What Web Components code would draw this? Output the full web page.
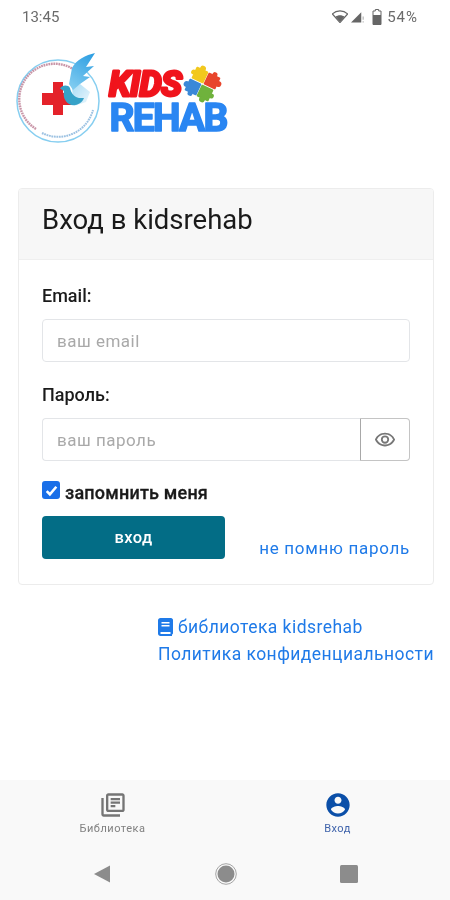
<!DOCTYPE html>
<html lang="ru">
<head>
<meta charset="utf-8">
<title>kidsrehab</title>
<style>
  html, body {
    margin: 0;
    height: 900px;
    background: #fff;
    font-family: Roboto, "Liberation Sans", sans-serif;
  }

  body {
    display: flex;
    flex-direction: column;
    overflow: hidden;
    filter: blur(0.35px);
  }
</style>
</head>
<body>
<kr-status-bar time="13:45" battery="54%"></kr-status-bar>
<kr-logo></kr-logo>
<kr-login-card heading="Вход в kidsrehab">
  <kr-field label="Email:" placeholder="ваш email"></kr-field>
  <kr-field label="Пароль:" placeholder="ваш пароль" reveal></kr-field>
  <kr-login-actions></kr-login-actions>
</kr-login-card>
<kr-links></kr-links>
<kr-tab-bar></kr-tab-bar>
<kr-nav-bar></kr-nav-bar>

<script>
/**
 * Small helper, every element below is a template plus an open shadow root.
 */
const makeTemplate = (html) => {
  const template = document.createElement('template')
  template.innerHTML = html
  return template
}

const statusTemplate = makeTemplate(`
<style>
  :host {
    display: flex;
    justify-content: space-between;
    align-items: center;
    height: 33px;
    padding: 0 32px 0 22px;
    font-size: 15px;
    color: #6b6b6b;
  }

  .right {
    display: flex;
    align-items: center;
  }

  #battery {
    margin-left: 5px;
    letter-spacing: 1px;
  }

  .signal {
    margin: 0 7px 0 3px;
  }

  svg {
    display: block;
    fill: #666;
  }
</style>
<span id="time"></span>
<div class="right">
  <svg width="16" height="13" viewBox="0 0 17 14">
    <path d="M8.500 13.500 0.300 4.200C2.400 2.300 5.300 1 8.500 1s6.100 1.300 8.200 3.200z" fill="none" stroke="#666" stroke-width="1.300"/>
    <path d="M8.500 13 3.600 7.300C5 6.300 6.700 5.700 8.500 5.700s3.500.6 4.900 1.600z"/>
  </svg>
  <svg class="signal" width="14" height="14" viewBox="0 0 15 14">
    <path d="M0 13 11 2v11z"/>
    <path d="M12.500 6.500h1v3.500h-1zM12.500 11.500h1V13h-1z" opacity=".6"/>
  </svg>
  <svg width="10" height="16" viewBox="0 0 10 16">
    <path d="M3.300 0.500h3.400v1.500H9v13.500H1V2h2.300z" fill="none" stroke="#666"/>
    <path d="M1 6h8v9.500H1z"/>
  </svg>
  <span id="battery"></span>
</div>
`)

customElements.define('kr-status-bar',
  class extends HTMLElement {
    constructor () {
      super()
      this.attachShadow({ mode: 'open' })
        .appendChild(statusTemplate.content.cloneNode(true))
      this.shadowRoot.querySelector('#time').textContent = this.getAttribute('time')
      this.shadowRoot.querySelector('#battery').textContent = this.getAttribute('battery')
    }
  })

// the viewBox uses page coordinates so it is easy to compare with the screenshot
const logoTemplate = makeTemplate(`
<style>
  :host {
    display: block;
    height: 155px;
  }

  svg {
    display: block;
    margin-left: 15px;
    margin-top: 17px;
    filter: blur(0.45px);
  }

  text {
    font-family: Roboto, sans-serif;
    font-weight: 700;
    stroke-linejoin: round;
  }
</style>
<svg width="220" height="100" viewBox="15 50 220 100" role="img" aria-label="Kids Rehab">
  <defs>
    <linearGradient id="wing" x1="0.8" y1="0" x2="0.3" y2="1">
      <stop offset="0" stop-color="#2f9fe2"/>
      <stop offset="1" stop-color="#7fcbf0"/>
    </linearGradient>
    <linearGradient id="pale" x1="0" y1="0" x2="1" y2="1">
      <stop offset="0" stop-color="#a9dcf5"/>
      <stop offset="1" stop-color="#eef8fd"/>
    </linearGradient>
  </defs>
  <circle cx="58" cy="101" r="41" fill="#fff" stroke="#86cef0" stroke-width="1.500"/>
  <path d="M36 129A35 35 0 0 1 73 69" fill="none" stroke="#a5506e" stroke-width="2.400" stroke-dasharray="1.800 .7" opacity=".6"/>
  <path d="M42 133A36 36 0 0 0 93 110" fill="none" stroke="#4c8fcb" stroke-width="2" stroke-dasharray="1.800 .7" opacity=".55"/>
  <path d="M53 82h10v11h9v12h-9v10H53v-10H42V93h11z" fill="#e4222a"/>
  <path d="M72 88 80 84 90 92 86 102 74 106z" fill="url(#pale)"/>
  <path d="M95 53C86 55 76 60 72 68L69 84 73 90 80 84 90 77 83 76 94 66 86 67z" fill="url(#wing)"/>
  <path d="M60 88.500C62 85 68 84.500 70 88 71 93 74 97 79 98L84 98C82 104 74 107 69 104 64 101 63 95 64 91z" fill="#36a2c8"/>
  <text x="109" y="96" font-size="35" letter-spacing="-.5" font-style="italic" fill="#f0141c" stroke="#f0141c" stroke-width="3">KIDS</text>
  <text x="109.500" y="131" font-size="39" letter-spacing="-1.750" fill="#2a86f2" stroke="#2a86f2" stroke-width="1.600">REHAB</text>
  <g transform="rotate(25 200 75)">
    <rect x="193.500" y="68.500" width="13" height="13" rx="1" fill="#f2c81e"/>
    <circle cx="200" cy="68" r="3" fill="#f2c81e"/>
    <circle cx="193" cy="75" r="2.500" fill="#f2c81e"/>
  </g>
  <g transform="rotate(25 212 81)">
    <rect x="205.500" y="74.500" width="13" height="13" rx="1" fill="#e8452c"/>
    <circle cx="219" cy="81" r="3" fill="#e8452c"/>
    <circle cx="212" cy="74" r="2.500" fill="#e8452c"/>
  </g>
  <g transform="rotate(25 193 87)">
    <rect x="186.500" y="80.500" width="13" height="13" rx="1" fill="#3a88d8"/>
    <circle cx="186" cy="87" r="3" fill="#3a88d8"/>
    <circle cx="193" cy="94" r="2.500" fill="#3a88d8"/>
  </g>
  <g transform="rotate(25 205 93)">
    <rect x="198.500" y="86.500" width="13" height="13" rx="1" fill="#6fb23c"/>
    <circle cx="205" cy="100" r="3" fill="#6fb23c"/>
    <circle cx="212" cy="93" r="2.500" fill="#6fb23c"/>
  </g>
</svg>
`)

customElements.define('kr-logo',
  class extends HTMLElement {
    constructor () {
      super()
      this.attachShadow({ mode: 'open' })
        .appendChild(logoTemplate.content.cloneNode(true))
    }
  })

const cardTemplate = makeTemplate(`
<style>
  :host {
    display: block;
    margin: 0 16px 0 18px;
    border: 1px solid #ececec;
    border-radius: 4px;
    background: #fff;
    overflow: hidden;
    color: #1a1a1a;
  }

  header {
    height: 71px;
    padding: 0 0 10px 23px;
    display: flex;
    align-items: center;
    box-sizing: border-box;
    background: #f7f7f7;
    border-bottom: 1px solid #efefef;
    font-size: 27.5px;
  }

  .body {
    padding: 25px 23px 25px;
  }
</style>
<header id="heading"></header>
<div class="body"><slot></slot></div>
`)

customElements.define('kr-login-card',
  class extends HTMLElement {
    constructor () {
      super()
      this.attachShadow({ mode: 'open' })
        .appendChild(cardTemplate.content.cloneNode(true))
      this.shadowRoot.querySelector('#heading').textContent = this.getAttribute('heading')
    }
  })

const fieldTemplate = makeTemplate(`
<style>
  :host {
    display: block;
    margin-bottom: 22px;
  }

  label {
    display: block;
    font-size: 18px;
    font-weight: 500;
    line-height: 22px;
    margin-bottom: 12px;
  }

  .group {
    display: flex;
    height: 43px;
  }

  input {
    flex: 1;
    min-width: 0;
    box-sizing: border-box;
    padding: 0 14px;
    border: 1px solid #e3e5e8;
    border-radius: 4px;
    outline: none;
    font: 17px Roboto, "Liberation Sans", sans-serif;
    letter-spacing: 0.5px;
    color: #333;
  }

  input::placeholder {
    color: #a9a9a9;
    opacity: 1;
  }

  button {
    display: none;
    width: 50px;
    padding: 0;
    background: #fff;
    border: 1px solid #c4c4c4;
    border-left-color: #a8a8a8;
    border-radius: 0 4px 4px 0;
    align-items: center;
    justify-content: center;
  }

  :host([reveal]) input {
    border-radius: 4px 0 0 4px;
    border-right: 0;
  }

  :host([reveal]) button {
    display: flex;
  }

  svg {
    display: block;
    fill: #777;
  }
</style>
<label for="input"></label>
<div class="group">
  <input id="input" type="text">
  <button type="button" aria-label="показать пароль">
    <svg width="22" height="22" viewBox="0 0 24 24">
      <path d="M12 6a9.770 9.770 0 0 1 8.820 5.500C19.170 14.870 15.790 17 12 17s-7.170-2.130-8.820-5.500A9.770 9.770 0 0 1 12 6m0-2C7 4 2.730 7.110 1 11.500 2.730 15.890 7 19 12 19s9.270-3.110 11-7.500C21.270 7.110 17 4 12 4zm0 5a2.500 2.500 0 1 1 0 5 2.500 2.500 0 0 1 0-5m0-2a4.500 4.500 0 1 0 0 9 4.500 4.500 0 0 0 0-9z"/>
    </svg>
  </button>
</div>
`)

customElements.define('kr-field',
  class extends HTMLElement {
    constructor () {
      super()
      this.attachShadow({ mode: 'open' })
        .appendChild(fieldTemplate.content.cloneNode(true))
      this.shadowRoot.querySelector('label').textContent = this.getAttribute('label')
      this.shadowRoot.querySelector('input').placeholder = this.getAttribute('placeholder')
    }
  })

const actionsTemplate = makeTemplate(`
<style>
  :host {
    display: block;
    margin-top: -3px;
  }

  .remember {
    display: flex;
    align-items: center;
    gap: 5px;
    height: 20px;
    font-size: 18px;
    font-weight: 500;
    letter-spacing: 0.2px;
    -webkit-text-stroke: 0.3px;
  }

  .remember span:last-child {
    padding-top: 5px;
  }

  .box {
    width: 18px;
    height: 18px;
    border-radius: 3px;
    background: #1a6fe8;
    display: flex;
    align-items: center;
    justify-content: center;
  }

  .row {
    display: flex;
    justify-content: space-between;
    align-items: flex-end;
    margin-top: 16px;
  }

  button {
    width: 183px;
    height: 43px;
    border: 0;
    border-radius: 4px;
    background: #036d86;
    color: #fff;
    font: 500 16.5px Roboto, "Liberation Sans", sans-serif;
    letter-spacing: 0.4px;
    padding: 0;
  }

  a {
    color: #1f7ae8;
    font-size: 17px;
    letter-spacing: 0.7px;
    line-height: 22px;
    text-decoration: none;
  }
</style>
<div class="remember">
  <span class="box">
    <svg width="15" height="15" viewBox="0 0 14 14"><path d="M2.500 7.500 5.500 10.500 11.500 3.500" fill="none" stroke="#fff" stroke-width="2.400"/></svg>
  </span>
  <span>запомнить меня</span>
</div>
<div class="row">
  <button type="button">вход</button>
  <a href="#">не помню пароль</a>
</div>
`)

customElements.define('kr-login-actions',
  class extends HTMLElement {
    constructor () {
      super()
      this.attachShadow({ mode: 'open' })
        .appendChild(actionsTemplate.content.cloneNode(true))
    }
  })

const linksTemplate = makeTemplate(`
<style>
  :host {
    display: flex;
    flex-direction: column;
    align-items: flex-start;
    gap: 5px;
    margin: 31px 0 0 158px;
    flex: 1;
    font-size: 17.5px;
    letter-spacing: 0.45px;
    line-height: 22px;
  }

  a {
    display: flex;
    align-items: center;
    gap: 5px;
    color: #1f7ae8;
    text-decoration: none;
    white-space: nowrap;
  }

  svg {
    display: block;
  }
</style>
<a href="#">
  <svg width="15" height="18" viewBox="0 0 15 18">
    <path d="M2.500 0H13c1 0 2 1 2 2v13c0 1-1 1.500-1 1.500V18H2.500C1 18 0 17 0 15.500v-13C0 1 1 0 2.500 0z" fill="#1f7ae8"/>
    <path d="M3.500 4h8v1.500h-8zM3.500 7h8v1.500h-8z" fill="#fff"/>
    <path d="M2.500 14h10v2h-10z" fill="#fff"/>
  </svg>
  библиотека kidsrehab
</a>
<a href="#">Политика конфиденциальности</a>
`)

customElements.define('kr-links',
  class extends HTMLElement {
    constructor () {
      super()
      this.attachShadow({ mode: 'open' })
        .appendChild(linksTemplate.content.cloneNode(true))
    }
  })

const tabsTemplate = makeTemplate(`
<style>
  :host {
    display: flex;
    justify-content: space-around;
    height: 68px;
    background: #f9f9f9;
    font-size: 11px;
    letter-spacing: 0.5px;
  }

  .tab {
    width: 225px;
    display: flex;
    flex-direction: column;
    align-items: center;
    padding-top: 11px;
    gap: 3px;
    color: #808080;
    box-sizing: border-box;
  }

  .tab.active {
    color: #3f63ab;
  }

  svg {
    display: block;
  }
</style>
<div class="tab">
  <svg width="28" height="28" viewBox="0 0 24 24" fill="#757575">
    <path d="M4 6H2v14c0 1.100.9 2 2 2h14v-2H4V6zm16-4H8c-1.100 0-2 .9-2 2v12c0 1.100.9 2 2 2h12c1.100 0 2-.9 2-2V4c0-1.100-.9-2-2-2zm0 14H8V4h12v12zM10 9h8v2h-8zm0 3h4v2h-4zm0-6h8v2h-8z"/>
  </svg>
  <span>Библиотека</span>
</div>
<div class="tab active">
  <svg width="28" height="28" viewBox="0 0 24 24" fill="#0b4fa8">
    <path d="M12 2C6.480 2 2 6.480 2 12s4.480 10 10 10 10-4.480 10-10S17.520 2 12 2zm0 3c1.660 0 3 1.340 3 3s-1.340 3-3 3-3-1.340-3-3 1.340-3 3-3zm0 14.200c-2.500 0-4.710-1.280-6-3.220.03-1.990 4-3.080 6-3.080 1.990 0 5.970 1.090 6 3.080-1.290 1.940-3.500 3.220-6 3.220z"/>
  </svg>
  <span>Вход</span>
</div>
`)

customElements.define('kr-tab-bar',
  class extends HTMLElement {
    constructor () {
      super()
      this.attachShadow({ mode: 'open' })
        .appendChild(tabsTemplate.content.cloneNode(true))
    }
  })

const navTemplate = makeTemplate(`
<style>
  :host {
    display: flex;
    justify-content: space-between;
    align-items: center;
    height: 52px;
    padding: 0 92px 0 93px;
    background: #f9f9f9;
  }

  svg {
    display: block;
    fill: #8c8c8c;
  }
</style>
<svg width="18" height="18" viewBox="0 0 18 18"><path d="M17 0.500v17L1 9z"/></svg>
<svg width="22" height="22" viewBox="0 0 22 22">
  <circle cx="11" cy="11" r="8.500"/>
  <circle cx="11" cy="11" r="10.300" fill="none" stroke="#a5a5a5" stroke-width="1"/>
</svg>
<svg width="18" height="18" viewBox="0 0 18 18"><rect width="18" height="18" rx="1.500"/></svg>
`)

customElements.define('kr-nav-bar',
  class extends HTMLElement {
    constructor () {
      super()
      this.attachShadow({ mode: 'open' })
        .appendChild(navTemplate.content.cloneNode(true))
    }
  })
</script>
</body>
</html>
